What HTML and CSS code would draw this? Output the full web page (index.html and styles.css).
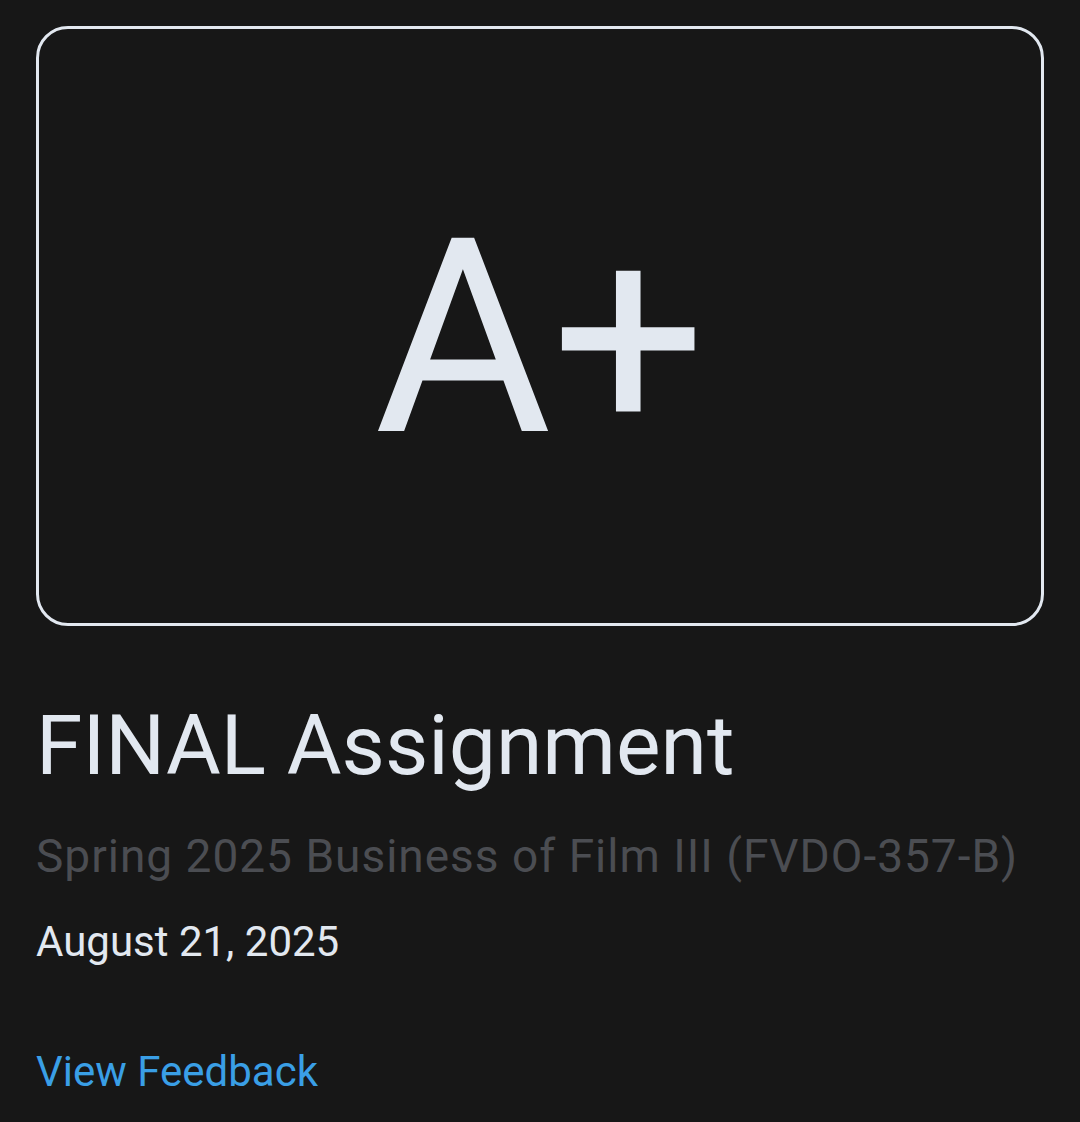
FILE: index.html
```html
<!DOCTYPE html>
<html>
<head>
<meta charset="utf-8">
<link rel="stylesheet" href="styles.css">
</head>
<body>
<main class="page">
  <div class="grade-card">
    <span class="grade">A+</span>
  </div>
  <h1 class="title">FINAL Assignment</h1>
  <p class="course">Spring 2025 Business of Film III (FVDO-357-B)</p>
  <p class="date">August 21, 2025</p>
  <a class="feedback" href="#">View Feedback</a>
</main>
</body>
</html>
```

FILE: styles.css
```css
html, body {
  margin: 0;
  padding: 0;
  background: #171717;
}
body {
  font-family: Roboto, "Noto Sans", sans-serif;
  color: #e2e8f0;
}
.page {
  padding: 26px 36px 0 36px;
  display: flex;
  flex-direction: column;
  align-items: flex-start;
}
.grade-card {
  align-self: stretch;
  height: 594px;
  border: 3px solid #e2e8f0;
  border-radius: 32px;
  display: flex;
  align-items: center;
  justify-content: center;
}
.grade {
  margin-top: 24px;
  font-size: 272px;
  line-height: 1;
  color: #e2e8f0;
}
.title {
  margin: 70px 0 0 0;
  font-size: 84px;
  font-weight: 400;
  line-height: 1.2;
}
.course {
  margin: 32px 0 0 0;
  font-size: 46px;
  letter-spacing: 1px;
  color: #4b4d52;
  line-height: 1.2;
}
.date {
  margin: 33px 0 0 0;
  font-size: 42px;
  line-height: 1.2;
}
.feedback {
  margin-top: 80px;
  font-size: 42px;
  line-height: 1.2;
  color: #3a9fe6;
  text-decoration: none;
}
```
